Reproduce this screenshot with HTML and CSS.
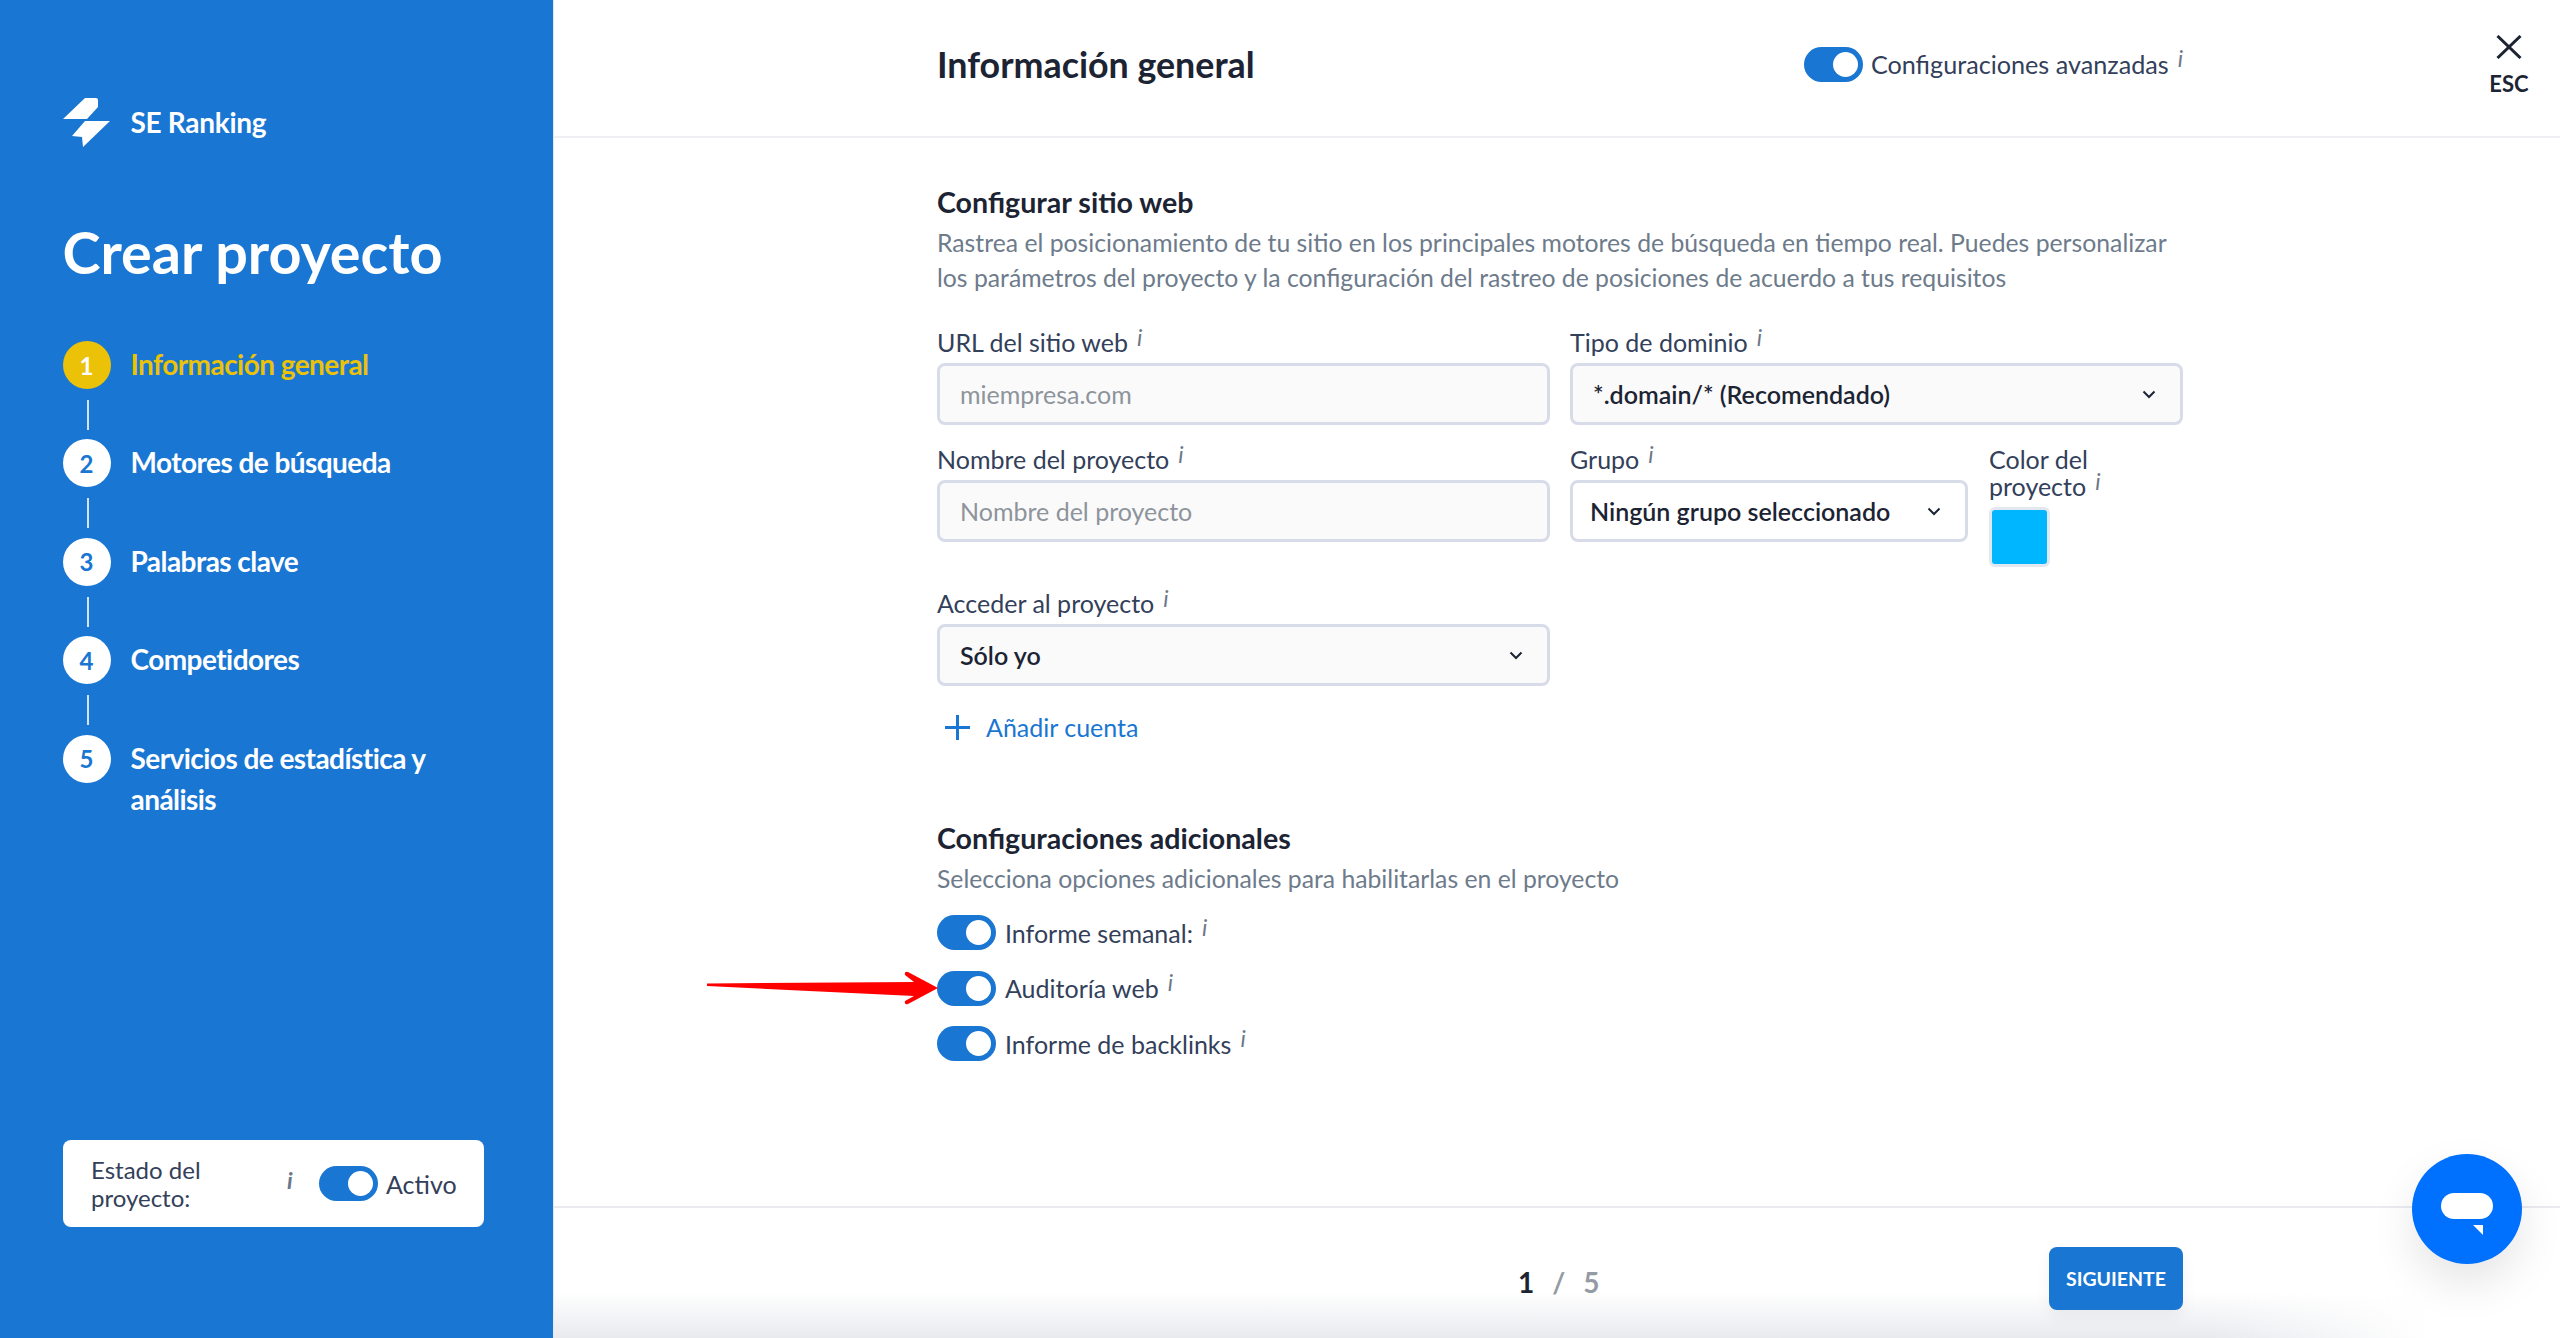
FILE: index.html
```html
<!DOCTYPE html>
<html lang="es">
<head>
<meta charset="utf-8">
<title>Crear proyecto</title>
<link rel="stylesheet" href="styles.css">
</head>
<body>
<div class="page">
  <aside class="sidebar">
    <div class="brand">
      <svg class="brand-logo" viewBox="0 0 47 50"><path d="M0 22 L22 1 H33 Q35 1 35 3 V10 L24 22 Z M22 24 H47 L20 50 L19 40 L9 39 Z" fill="#fff"/></svg>
      <span class="brand-name">SE Ranking</span>
    </div>
    <h1 class="page-title">Crear proyecto</h1>
    <ol class="steps">
      <li class="step step-active"><span class="step-num">1</span><span class="step-label">Información general</span></li>
      <li class="step"><span class="step-num">2</span><span class="step-label">Motores de búsqueda</span></li>
      <li class="step"><span class="step-num">3</span><span class="step-label">Palabras clave</span></li>
      <li class="step"><span class="step-num">4</span><span class="step-label">Competidores</span></li>
      <li class="step step-last"><span class="step-num">5</span><span class="step-label">Servicios de estadística y análisis</span></li>
    </ol>
    <div class="status">
      <span class="status-label">Estado del proyecto:</span>
      <i class="status-i">i</i>
      <span class="toggle"></span>
      <span class="status-value">Activo</span>
    </div>
  </aside>
  <main class="main">
    <header class="topbar">
      <div class="inner topbar-inner">
        <h2 class="main-title">Información general</h2>
        <div class="adv"><span class="toggle"></span><span class="adv-label">Configuraciones avanzadas</span><i class="info info-sup">i</i></div>
      </div>
      <div class="esc">
        <svg class="esc-x" viewBox="0 0 26 24"><path d="M1.5 1 L24.5 23 M24.5 1 L1.5 23" stroke="#1c2433" stroke-width="3" fill="none"/></svg>
        <span class="esc-label">ESC</span>
      </div>
    </header>
    <section class="content">
      <div class="inner">
        <h3 class="section-title">Configurar sitio web</h3>
        <p class="section-desc">Rastrea el posicionamiento de tu sitio en los principales motores de búsqueda en tiempo real. Puedes personalizar los parámetros del proyecto y la configuración del rastreo de posiciones de acuerdo a tus requisitos</p>
        <div class="form-grid">
          <div class="field">
            <label class="label">URL del sitio web<i class="info">i</i></label>
            <div class="control control-gray placeholder">miempresa.com</div>
          </div>
          <div class="field">
            <label class="label">Tipo de dominio<i class="info">i</i></label>
            <div class="control control-gray control-select value"><span>*.domain/* (Recomendado)</span><svg class="chev" viewBox="0 0 14 9"><path d="M1.5 1.5 L7 7 L12.5 1.5" fill="none" stroke="#1c2433" stroke-width="2"/></svg></div>
          </div>
          <div class="field">
            <label class="label">Nombre del proyecto<i class="info">i</i></label>
            <div class="control control-gray placeholder">Nombre del proyecto</div>
          </div>
          <div class="field group-row">
            <div class="group-col">
              <label class="label">Grupo<i class="info">i</i></label>
              <div class="control control-select value group-control"><span>Ningún grupo seleccionado</span><svg class="chev" viewBox="0 0 14 9"><path d="M1.5 1.5 L7 7 L12.5 1.5" fill="none" stroke="#1c2433" stroke-width="2"/></svg></div>
            </div>
            <div class="color-col">
              <label class="label label-wrap">Color del proyecto<i class="info">i</i></label>
              <div class="swatch"></div>
            </div>
          </div>
          <div class="field access">
            <label class="label">Acceder al proyecto<i class="info">i</i></label>
            <div class="control control-gray control-select value"><span>Sólo yo</span><svg class="chev" viewBox="0 0 14 9"><path d="M1.5 1.5 L7 7 L12.5 1.5" fill="none" stroke="#1c2433" stroke-width="2"/></svg></div>
          </div>
        </div>
        <div class="add-account">
          <svg class="plus" viewBox="0 0 25 25"><path d="M12.5 0 V25 M0 12.5 H25" stroke="#1976d2" stroke-width="3" fill="none"/></svg>
          <span>Añadir cuenta</span>
        </div>
        <h3 class="section-title section-extra">Configuraciones adicionales</h3>
        <p class="section-desc section-desc-extra">Selecciona opciones adicionales para habilitarlas en el proyecto</p>
        <ul class="options">
          <li class="option"><span class="toggle"></span><span>Informe semanal:</span><i class="info info-sup">i</i></li>
          <li class="option"><span class="toggle"></span><span>Auditoría web</span><i class="info info-sup">i</i></li>
          <li class="option"><span class="toggle"></span><span>Informe de backlinks</span><i class="info info-sup">i</i></li>
        </ul>
      </div>
    </section>
    <footer class="footer">
      <div class="inner footer-inner">
        <div class="pager"><span class="pager-cur">1</span><span class="pager-sep">/</span><span class="pager-total">5</span></div>
        <button class="next">SIGUIENTE</button>
      </div>
    </footer>
  </main>
  <svg class="arrow" viewBox="0 0 231 34"><path d="M0 12.5 L207 11 L198 4 Q197 0 201 1 L231 17 L201 33 Q197 34 198 30 L207 25 L0 15 Z" fill="#ff0000"/></svg>
  <div class="chat">
    <svg class="chat-icon" viewBox="0 0 52 42"><rect x="0" y="0" width="52" height="26" rx="13" fill="#fff"/><path d="M32 32 H42 V42 Z" fill="#fff"/></svg>
  </div>
</div>
</body>
</html>
```
FILE: styles.css
```css
* { box-sizing: border-box; }
html, body { margin: 0; padding: 0; }
body { font-family: Lato, "Open Sans", sans-serif; color: #33405a; background: #fff; }
.page { position: relative; display: flex; width: 2560px; height: 1338px; overflow: hidden; }
.sidebar { width: 554px; flex: none; background: #1976d2; color: #fff; padding: 97px 0 0 62.5px; display: flex; flex-direction: column; border-right: 1px solid #e4e8f0; }
.brand { display: flex; align-items: center; gap: 21px; height: 50px; }
.brand-logo { width: 47px; height: 50px; flex: none; }
.brand-name { font-size: 28px; font-weight: 700; letter-spacing: -0.3px; }
.page-title { margin: 67px 0 0; font-size: 57.5px; line-height: 76px; font-weight: 700; }
.steps { list-style: none; margin: 51px 0 0; padding: 0; width: 430px; }
.step { position: relative; display: flex; align-items: flex-start; gap: 20px; height: 98.4px; }
.step::after { content: ""; position: absolute; left: 24px; top: 59px; width: 2px; height: 30px; background: #d5e4f5; }
.step-last::after { display: none; }
.step-num { flex: none; width: 48px; height: 48px; border-radius: 50%; background: #fff; color: #1976d2; font-size: 24px; font-weight: 700; display: flex; align-items: center; justify-content: center; }
.step-label { font-size: 28px; font-weight: 700; letter-spacing: -0.55px; line-height: 41px; padding-top: 3px; }
.step-active .step-num { background: #ebc207; color: #fff; }
.step-active .step-label { color: #ebc207; }
.status { position: absolute; left: 63px; top: 1140px; width: 421px; height: 87px; background: #fff; border-radius: 8px; color: #33405a; display: flex; align-items: center; padding-left: 28px; font-size: 24px; }
.status-label { width: 180px; line-height: 28px; }
.status-i { width: 20px; margin-left: 16px; font-style: italic; font-weight: 700; font-size: 23px; color: #6b7788; position: relative; top: -4px; }
.status .toggle { margin-left: 12px; }
.status-value { margin-left: 8px; font-size: 25px; }
.toggle { position: relative; flex: none; display: inline-block; width: 59px; height: 35px; border-radius: 18px; background: #1976d2; }
.toggle::after { content: ""; position: absolute; right: 5px; top: 5px; width: 25px; height: 25px; border-radius: 50%; background: #fff; }
.main { position: relative; flex: 1; min-width: 0; display: flex; flex-direction: column; background: #fff; }
.inner { width: 1246px; margin-left: 383px; }
.topbar { position: relative; flex: none; height: 138px; border-bottom: 2px solid #eff0f3; }
.topbar-inner { display: flex; align-items: center; justify-content: space-between; height: 128px; }
.main-title { margin: 0; font-size: 35.8px; font-weight: 700; color: #1c2433; }
.adv { display: flex; align-items: center; font-size: 25.2px; }
.adv-label { margin-left: 8px; }
.info { font-style: italic; font-size: 23px; color: #6b7788; margin-left: 9px; position: relative; top: -6px; }
.esc { position: absolute; left: 1929px; top: 35px; width: 52px; display: flex; flex-direction: column; align-items: center; }
.esc-x { width: 26px; height: 24px; }
.esc-label { font-size: 22px; font-weight: 700; color: #1c2433; line-height: 26px; margin-top: 12px; }
.content { flex: 1; min-height: 0; }
.section-title { margin: 47px 0 0; font-size: 28.6px; line-height: 34px; font-weight: 700; color: #1c2433; }
.section-desc { margin: 6px 0 0; font-size: 24.75px; line-height: 35px; color: #6d7b8b; }
.form-grid { display: grid; grid-template-columns: 613px 613px; column-gap: 20px; margin-top: 31px; }
.field { display: flex; flex-direction: column; }
.label { display: block; font-size: 25px; line-height: 32px; height: 37px; color: #33405a; }
.control { height: 62px; border: 3px solid #d8dce9; border-radius: 8px; display: flex; align-items: center; padding: 0 20px; font-size: 25px; margin-bottom: 18px; }
.control-gray { background: #fafafa; }
.control-select { justify-content: space-between; padding-right: 24px; }
.placeholder { color: #8d949b; }
.value { color: #1c2433; font-weight: 600; }
.chev { width: 14px; height: 9px; flex: none; }
.group-row { flex-direction: row; gap: 21px; }
.group-col { width: 398px; flex: none; }
.group-control { padding-left: 17px; }
.color-col { flex: 1; }
.label-wrap { height: auto; line-height: 27px; width: 170px; position: relative; top: 3px; }
.swatch { width: 61px; height: 60px; background: #00b6ff; border: 3px solid #e3e7f0; border-radius: 6px; margin-top: 9px; }
.access { margin-top: 20px; }
.access .control { margin-bottom: 0; }
.add-account { display: flex; align-items: center; gap: 16px; margin: 28px 0 0 8px; font-size: 25px; color: #1976d2; height: 26px; }
.plus { width: 25px; height: 25px; flex: none; }
.section-extra { margin-top: 81px; }
.section-desc-extra { margin-top: 6px; }
.options { list-style: none; padding: 0; margin: 19px 0 0; }
.option { display: flex; align-items: center; height: 35px; margin-bottom: 20.5px; font-size: 25px; }
.option > span:nth-child(2) { margin-left: 9px; }
.footer { position: relative; flex: none; height: 132px; border-top: 2px solid #e9ebf1; }
.footer::after { content: ""; position: absolute; left: 0; right: 130px; bottom: 0; height: 46px; background: linear-gradient(to bottom, rgba(232,234,238,0), #e8eaee); -webkit-mask-image: linear-gradient(to right, #000 calc(100% - 220px), transparent); mask-image: linear-gradient(to right, #000 calc(100% - 220px), transparent); }
.footer-inner { position: relative; z-index: 1; display: flex; justify-content: flex-end; padding-top: 39px; }
.pager { position: absolute; left: 581px; top: 57px; display: flex; font-size: 28px; font-weight: 700; line-height: 34px; }
.pager-cur { color: #1c2433; }
.pager-sep { margin-left: 18px; color: #959ba5; }
.pager-total { margin-left: 18px; color: #959ba5; }
.next { width: 134px; height: 63px; border: 0; border-radius: 8px; background: #1976d2; color: #fff; font: 700 19.5px Lato, sans-serif; box-shadow: 0 8px 16px rgba(0,0,0,.05); padding: 0; }
.arrow { position: absolute; left: 707px; top: 971px; width: 231px; height: 34px; }
.chat { position: absolute; left: 2412px; top: 1154px; width: 110px; height: 110px; border-radius: 50%; background: #0070ff; box-shadow: 0 20px 44px rgba(0,0,0,.10); display: flex; align-items: center; justify-content: center; }
.chat-icon { width: 52px; height: 42px; margin-top: 10px; }
```
